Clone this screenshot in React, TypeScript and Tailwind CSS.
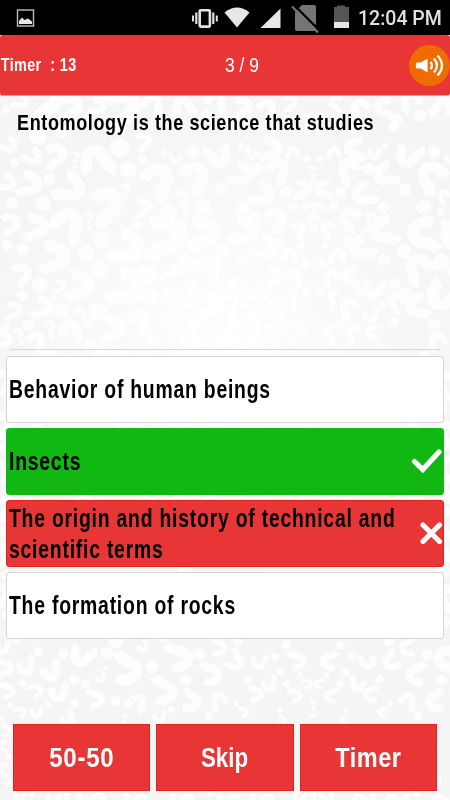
type Mark = [number, number, number, number]

// hook centre x/y, dot centre x/y
const topMarks: Mark[] = [
  [60, 20, 20, 45], [135, 20, 118, 122], [210, 40, 188, 112], [290, 35, 260, 75], [365, 45, 363, 158],
  [460, 30, 500, 80], [555, 40, 620, 60], [650, 20, 690, 70], [25, 150, -20, 170], [95, 185, 45, 205],
  [165, 185, 150, 253], [225, 185, 225, 211], [295, 200, 385, 222], [430, 140, 428, 192], [525, 188, 492, 172],
  [650, 180, 578, 172], [85, 270, 38, 325], [20, 265, -20, 300], [205, 280, 132, 328], [375, 282, 377, 308],
  [475, 260, 508, 350], [585, 250, 612, 335], [430, 340, 413, 390], [318, 335, 310, 435], [548, 308, 560, 348],
  [105, 400, 70, 465], [30, 390, 22, 450], [205, 395, 260, 473], [268, 367, 268, 396], [375, 460, 300, 527],
  [490, 430, 443, 540], [605, 420, 558, 503], [547, 390, 555, 418], [160, 490, 122, 572], [65, 540, 68, 602],
  [235, 575, 188, 648], [177, 575, 160, 610], [375, 580, 297, 653], [125, 640, 85, 692], [40, 650, 20, 698],
  [242, 660, 265, 690], [150, 695, 158, 728], [215, 710, 270, 748], [335, 705, 300, 770], [420, 680, 460, 735],
  [545, 600, 450, 607], [515, 530, 485, 557], [625, 525, 665, 600], [625, 635, 580, 690], [495, 670, 515, 700],
  [110, 740, 130, 790], [10, 735, -15, 780], [55, 715, 65, 740], [570, 740, 610, 780],
]

const centerMarks: Mark[] = [
  [720, 240, 665, 285], [835, 228, 860, 292], [810, 165, 775, 222], [755, 175, 722, 155], [880, 175, 920, 190],
  [940, 230, 940, 257], [905, 285, 880, 333], [785, 300, 730, 340], [830, 375, 838, 440], [768, 370, 780, 400],
  [895, 405, 905, 452], [725, 410, 670, 470], [790, 460, 730, 497], [870, 485, 915, 505], [825, 545, 800, 595],
  [755, 580, 695, 567], [885, 550, 920, 585], [765, 660, 730, 630], [880, 605, 885, 640], [835, 640, 860, 690],
  [690, 625, 700, 680], [820, 715, 840, 755], [760, 715, 740, 755], [895, 710, 885, 745], [725, 40, 700, 95],
  [800, 45, 820, 100], [870, 25, 860, 70], [920, 75, 925, 110], [930, 350, 940, 400],
]

const bottomMarks: Mark[] = [
  [80, 75, 118, 35], [155, 90, 190, 42], [250, 45, 320, 42], [378, 85, 350, 0], [302, 112, 318, 88],
  [178, 155, 225, 120], [285, 175, 257, 130], [105, 150, 68, 128], [20, 150, -5, 110], [405, 190, 348, 182],
  [490, 150, 458, 80], [572, 180, 558, 120], [535, 50, 490, -15], [630, 100, 600, 42], [112, 215, 145, 195],
  [205, 235, 225, 192], [15, 80, -10, 40], [60, 215, 30, 195], [480, 230, 515, 210], [370, 260, 375, 228],
  [655, 185, 625, 225], [430, 15, 440, -20], [705, 60, 715, 5], [780, 65, 825, 52], [890, 60, 860, 15],
  [810, 130, 843, 97], [765, 160, 743, 117], [885, 165, 860, 130], [940, 215, 940, 185], [730, 215, 710, 190],
  [845, 240, 842, 215], [920, 130, 900, 105], [655, 20, 640, -30], [10, 20, 50, 0], [20, 270, 5, 240],
  [10, 320, 25, 350], [10, 390, 25, 430], [60, 470, 95, 465], [160, 480, 200, 470], [290, 480, 240, 470],
  [420, 480, 380, 470], [560, 480, 520, 470], [630, 310, 580, 330], [620, 440, 570, 420], [800, 480, 760, 470],
  [900, 470, 940, 465], [700, 480, 660, 470],
]

const sideMarks: Mark[] = [
  [10, 860, 30, 920], [10, 990, 20, 1060], [5, 1130, 30, 1180], [10, 1240, 20, 1310], [10, 1380, 20, 1440],
  [5, 1500, 25, 1560], [540, 870, 560, 940], [535, 1020, 550, 1090], [530, 1180, 550, 1250], [540, 1350, 555, 1430],
  [535, 1510, 550, 1580], [90, 1225, 130, 1225], [260, 1225, 320, 1230], [450, 1225, 500, 1225], [640, 1225, 700, 1225],
  [120, 1010, 170, 1010], [380, 1010, 450, 1010], [650, 1010, 700, 1010], [150, 790, 210, 790], [360, 790, 430, 790],
]

function Hook({ mark, offset = 0 }: { mark: Mark; offset?: number }) {
  const [x, y, dx, dy] = mark
  const scale = Math.max(Math.hypot(dx - x, dy - y) / 34, 0.9)
  const angle = (Math.atan2(dy - y, dx - x) * 180) / Math.PI - 90
  const flip = offset > 0 ? -1 : 1
  return (
    <g transform={`translate(${x} ${y + offset}) rotate(${angle}) scale(${scale * flip} ${scale})`}>
      <path d="M-14 -7C-7 -15 11 -16 11 -4C11 6 -3 7 -4 21" fill="none" stroke="#fff" strokeWidth="13" />
      <circle cx="-1" cy="34" r="9" fill="#fff" />
    </g>
  )
}

function Pattern() {
  return (
    <svg className="absolute inset-0 h-full w-full" viewBox="0 0 450 800" aria-hidden="true">
      <defs>
        <radialGradient id="glow" gradientUnits="userSpaceOnUse" cx="225" cy="345" r="240">
          <stop offset="0" stopColor="#fff" />
          <stop offset="0.25" stopColor="#fcfcfc" />
          <stop offset="0.8" stopColor="#f7f7f7" />
          <stop offset="1" stopColor="#f5f5f5" />
        </radialGradient>
        <g id="marks">
          {topMarks.map((m, i) => <Hook key={`t${i}`} mark={m} />)}
          {centerMarks.map((m, i) => <Hook key={`c${i}`} mark={m} />)}
          {sideMarks.map((m, i) => <Hook key={`s${i}`} mark={m} />)}
          {bottomMarks.map((m, i) => <Hook key={`b${i}`} mark={m} offset={1635} />)}
        </g>
        <clipPath id="leftHalf">
          <rect x="0" y="-300" width="940" height="2500" />
        </clipPath>
      </defs>
      <rect width="450" height="800" fill="url(#glow)" />
      <g transform="translate(0 95) scale(0.33333)" opacity="0.75">
        <g clipPath="url(#leftHalf)"><use href="#marks" /></g>
        <g transform="translate(1880 0) scale(-1 1)" clipPath="url(#leftHalf)"><use href="#marks" /></g>
      </g>
    </svg>
  )
}

function StatusBar() {
  return (
    <div className="flex h-[35px] shrink-0 items-center bg-black">
      <svg className="h-[35px] w-[350px]" viewBox="0 0 350 35">
        <rect x="17.5" y="10" width="16" height="16" fill="none" stroke="#bdbdbd" strokeWidth="1.4" />
        <path d="M19 24V21L22 17.5L24.5 20L28 18.5L32 21.5V24Z" fill="#e8e8e8" />
        <g fill="none" stroke="#e0e0e0">
          <rect x="199.7" y="10.2" width="10.2" height="16.4" rx="1" strokeWidth="2.6" />
          <path d="M196.3 12.5V24M213.3 12.5V24" strokeWidth="2.2" />
          <path d="M193 15.5V21.5M216.8 15.5V21.5" strokeWidth="2" />
        </g>
        <path d="M224.5 12.5Q237 2.5 249.5 12.5L237 27.5Z" fill="#e6e6e6" />
        <path d="M280.5 8.5V28H260.5Z" fill="#e6e6e6" />
        <path d="M302 5H314Q316 5 316 7V29Q316 31 314 31H297Q295 31 295 29V12Z" fill="#757575" />
        <path d="M294 5L320 31" stroke="#000" strokeWidth="2.4" />
        <path d="M292 6.5L318 32.5" stroke="#757575" strokeWidth="2.2" />
        <path d="M334 7H337V5.5H345V7H349V22H334Z" fill="#555" />
        <path d="M334 22H349V28H334Z" fill="#e6e6e6" />
      </svg>
      <span className="ml-2 whitespace-nowrap pt-[3px] font-[Roboto] text-[19.5px] font-medium text-[#e0e0e0]">12:04 PM</span>
    </div>
  )
}

function SoundButton() {
  return (
    <button type="button" aria-label="Sound" className="mt-px h-[41px] w-[41px] rounded-full bg-[#ef6c00]">
      <svg viewBox="0 0 41 41" className="h-full w-full">
        <path d="M8 18Q7.5 18 7.5 19V22Q7.5 23 8 23H12L18 26.5V14.5L12 18Z" fill="#fff" stroke="#fff" strokeWidth="1.2" strokeLinejoin="round" />
        <g fill="none" stroke="#fff" strokeWidth="2.3">
          <path d="M21.5 17Q24.5 20.5 21.5 24" />
          <path d="M25 13.5Q31 20.5 25 27.5" />
          <path d="M28.5 10.5Q37.5 20.5 28.5 30.5" />
        </g>
      </svg>
    </button>
  )
}

const options = [
  { text: 'Behavior of human beings', state: 'idle' },
  { text: 'Insects', state: 'correct' },
  { text: 'The origin and history of technical and scientific terms', state: 'wrong' },
  { text: 'The formation of rocks', state: 'idle' },
]

const optionColors: Record<string, string> = {
  idle: 'border-[#d5d5d5] bg-white',
  correct: 'border-[#12b812] bg-[#12b812]',
  wrong: 'border-[#e52020] bg-[#e83535]',
}

const resultIcons: Record<string, string> = {
  correct: 'M7.5 15.5L15.8 23.5L32 6',
  wrong: 'M16 7L32.5 23.5M32.5 7L16 23.5',
}

const lifelines = [
  { label: '50-50', style: 'scale-x-[0.86] tracking-[0.8px]' },
  { label: 'Skip', style: 'scale-x-[0.8]' },
  { label: 'Timer', style: 'scale-x-[0.84] tracking-[0.6px]' },
]

export default function App() {
  return (
    <div className="relative h-[800px] w-[450px] overflow-hidden bg-[#f5f5f5] font-['Liberation_Sans',sans-serif]">
      <Pattern />
      <div className="relative flex h-full flex-col">
        <StatusBar />
        <header className="grid h-[61px] shrink-0 grid-cols-3 items-center rounded-[3px] border-b border-[#e99] bg-[#e83535] text-white">
          <span className="origin-left scale-x-[0.8] whitespace-pre pl-px text-[18px] font-bold tracking-[0.45px]">Timer  : 13</span>
          <span className="ml-[75px] origin-left scale-x-[0.83] whitespace-nowrap text-[21px]">3 / 9</span>
          <div className="flex justify-end"><SoundButton /></div>
        </header>

        <main className="flex flex-col">
          <div className="mx-[10px] h-[254px] border-b border-[#d8d8d8] pl-[7px] pt-3">
            <p className="origin-left scale-x-[0.82] whitespace-nowrap text-[22px] font-bold leading-[30px] tracking-[0.75px] text-black">
              Entomology is the science that studies
            </p>
          </div>
          <ul className="mt-[6px] flex flex-col gap-[5px] px-[6px]">
            {options.map((o) => (
              <li
                key={o.text}
                className={`flex h-[67px] items-center justify-between rounded-[3px] border pl-[2px] text-[25px] font-bold leading-[31px] tracking-[1px] text-black ${optionColors[o.state]}`}
              >
                <div className="w-[395px] shrink-0">
                  <p className="w-[508px] origin-left scale-x-[0.775]">{o.text}</p>
                </div>
                {resultIcons[o.state] && (
                  <svg className="h-[32px] w-[36px] shrink-0" viewBox="0 0 36 32">
                    <path d={resultIcons[o.state]} fill="none" stroke="#fff" strokeWidth="5.2" strokeLinecap="round" />
                  </svg>
                )}
              </li>
            ))}
          </ul>
        </main>

        <footer className="mt-auto mb-[9px] grid grid-cols-3 gap-[6px] pl-[13px] pr-[13px]">
          {lifelines.map(({ label, style }) => (
            <button key={label} type="button" className="h-[67px] border border-[#e52020] bg-[#e83535] text-[28px] font-bold text-white">
              <span className={`inline-block ${style}`}>{label}</span>
            </button>
          ))}
        </footer>
      </div>
    </div>
  )
}
